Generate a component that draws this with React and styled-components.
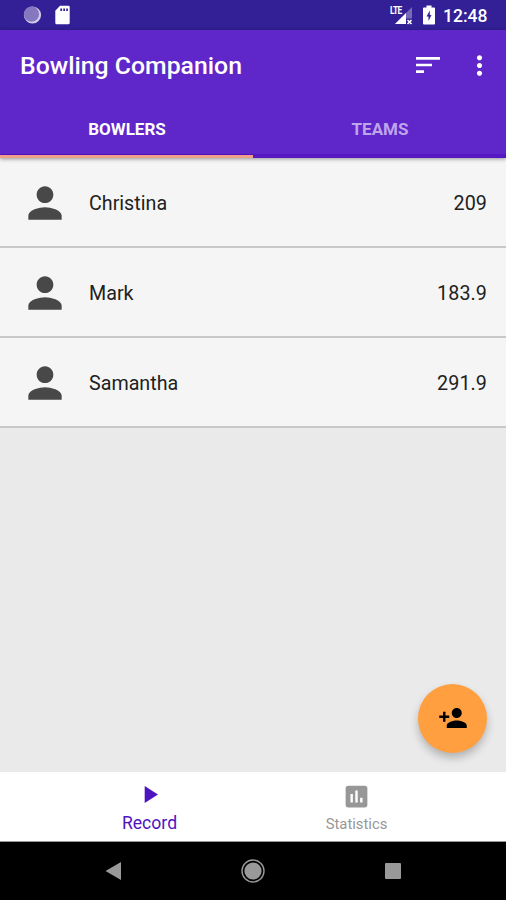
import React, { useState } from "react";
import styled, { createGlobalStyle } from "styled-components";

const GlobalStyle = createGlobalStyle`
  * {
    box-sizing: border-box;
  }

  body {
    margin: 0;
    font-family: Roboto, "Liberation Sans", sans-serif;
  }

  svg {
    display: block;
    flex-shrink: 0;
  }

  button {
    border: 0;
    padding: 0;
    background: none;
    font-family: inherit;
  }
`;

const Screen = styled.div`
  display: flex;
  flex-direction: column;
  width: 506px;
  height: 900px;
  overflow: hidden;
  background: #eaeaea;
`;

const StatusBar = styled.div`
  display: flex;
  align-items: center;
  justify-content: space-between;
  height: 30px;
  padding: 0 19px 0 23px;
  background: #331f96;
  color: #fff;
`;

const StatusGroup = styled.div`
  display: flex;
  align-items: center;
  gap: ${props => props.$gap};
`;

const Clock = styled.span`
  width: 44px;
  margin-left: -1px;
  font-size: 17.5px;
  font-weight: 500;
  line-height: 30px;
  padding-top: 2px;
  white-space: nowrap;
`;

const Header = styled.header`
  position: relative;
  background: #5f27ca;
  color: #fff;
  box-shadow: 0 1px 4px rgba(0, 0, 0, 0.4);
`;

const Toolbar = styled.div`
  display: flex;
  align-items: center;
  height: 70px;
  padding: 0 11px 0 20px;
`;

const Title = styled.h1`
  flex: 1;
  margin: 2px 0 0;
  font-size: 24.8px;
  font-weight: 500;
  line-height: 30px;
  white-space: nowrap;
`;

const ToolbarButton = styled.button`
  margin-left: 20px;
  color: #fff;
`;

const Tabs = styled.div`
  display: flex;
  height: 58px;
`;

const Tab = styled.button`
  flex: 1;
  height: 58px;
  padding: 2px 0 0 1px;
  border-bottom: 3px solid ${props => (props.$active ? "#f0a08a" : "#5618c2")};
  box-shadow: inset 0 -1px 0 ${props => (props.$active ? "#5010bd" : "#5618c2")};
  color: ${props => (props.$active ? "#fff" : "#bfa5ea")};
  font-size: 17px;
  font-weight: 700;
`;

const List = styled.main`
  flex: 1;
`;

const Row = styled.div`
  display: flex;
  align-items: center;
  height: 90px;
  padding: 0 19px 0 20px;
  border-bottom: 2px solid #c8c8c8;
  background: #f5f5f5;
  color: #212121;
  font-size: 19.7px;
`;

const Name = styled.span`
  flex: 1;
  margin-left: 19px;
  padding-top: 2px;
`;

const Average = styled.span`
  padding-top: 2px;
  letter-spacing: 0.1px;
`;

const Fab = styled.button`
  position: absolute;
  left: 418px;
  top: 684px;
  display: flex;
  align-items: center;
  justify-content: center;
  width: 69px;
  height: 69px;
  padding-bottom: 1px;
  border-radius: 50%;
  background: #ff9f40;
  color: #000;
  box-shadow: 0 5px 8px rgba(0, 0, 0, 0.24);
`;

const BottomNav = styled.nav`
  display: flex;
  justify-content: center;
  height: 70px;
  border-bottom: 1px solid #999;
  background: #fff;
`;

const NavItem = styled.button`
  display: flex;
  flex-direction: column;
  align-items: center;
  width: 207px;
  padding-top: ${props => (props.$active ? "8px" : "10px")};
  color: ${props => (props.$active ? "#4d14c1" : "#979797")};
`;

const NavLabel = styled.span`
  margin-top: ${props => (props.$active ? "4px" : "3px")};
  font-size: ${props => (props.$active ? "17.6px" : "14.8px")};
  line-height: 20px;
`;

const SystemBar = styled.div`
  display: flex;
  align-items: center;
  justify-content: space-between;
  height: 58px;
  padding: 0 105px 0 104px;
  background: #000;
  color: #999;
`;

// 24x24 icon, scaled to the given size
function Icon({ size, d }) {
  return (
    <svg width={size} height={size} viewBox="0 0 24 24" fill="currentColor">
      <path d={d} />
    </svg>
  );
}

const icons = {
  sort: "M3 18h6v-2H3v2zM3 6v2h18V6H3zm0 7h12v-2H3v2z",
  more: "M12 8c1.1 0 2-.9 2-2s-.9-2-2-2-2 .9-2 2 .9 2 2 2zm0 2c-1.1 0-2 .9-2 2s.9 2 2 2 2-.9 2-2-.9-2-2-2zm0 6c-1.1 0-2 .9-2 2s.9 2 2 2 2-.9 2-2-.9-2-2-2z",
  person: "M12 12c2.21 0 4-1.79 4-4s-1.79-4-4-4-4 1.79-4 4 1.79 4 4 4zm0 2c-2.67 0-8 1.34-8 4v2h16v-2c0-2.66-5.33-4-8-4z",
  personAdd: "M15 12c2.21 0 4-1.79 4-4s-1.79-4-4-4-4 1.79-4 4 1.79 4 4 4zm-9-2V7H4v3H1v2h3v3h2v-3h3v-2H6zm9 4c-2.67 0-8 1.34-8 4v2h16v-2c0-2.66-5.33-4-8-4z",
  play: "M8 5v14l11-7z",
  chart: "M19 3H5c-1.1 0-2 .9-2 2v14c0 1.1.9 2 2 2h14c1.1 0 2-.9 2-2V5c0-1.1-.9-2-2-2zM9 17H7v-7h2v7zm4 0h-2V7h2v10zm4 0h-2v-4h2v4z",
};

const bowlers = [
  { name: "Christina", average: "209" },
  { name: "Mark", average: "183.9" },
  { name: "Samantha", average: "291.9" },
];

const PersonIcon = styled.div`
  padding-top: 1px;
  color: #484848;
`;

function StatusIcons() {
  return (
    <StatusGroup $gap="13px">
      <svg width="19" height="20" viewBox="0 0 19 20">
        <circle cx="9.5" cy="10" r="8.6" fill="#d3cdec" />
        <circle cx="8.5" cy="9.2" r="7.6" fill="#8578bf" />
      </svg>
      <svg width="15" height="20" viewBox="0 0 15 20">
        <path d="M5 .7h8.3q1.4 0 1.4 1.4v15.7q0 1.5-1.4 1.5H1.7Q.3 19.3.3 17.8V5.7z" fill="#fff" />
        <path d="M5.3 3.500h1.8v2.500H5.3zM8.3 3.500H10v2.500H8.3zM11.2 3.500h1.7v2.500h-1.7z" fill="#331f96" />
      </svg>
    </StatusGroup>
  );
}

const Signal = styled.div`
  position: relative;
  width: 24px;
  height: 20px;
`;

const Lte = styled.span`
  position: absolute;
  left: 0;
  top: 1px;
  font-size: 10.5px;
  font-weight: 700;
  line-height: 9px;
  letter-spacing: -0.8px;
  transform: scaleX(0.8);
  transform-origin: left;
`;

function SignalIcons() {
  return (
    <StatusGroup $gap="9px">
      <Signal>
        <svg width="24" height="20" viewBox="0 0 24 20">
          <path d="M22 2v17H5z" fill="#7669b8" />
          <path d="M16 8v11H5z" fill="#fff" />
          <path d="M16 13.500h7v6.500h-7z" fill="#331f96" />
          <path d="M17.5 15l4 4M21.5 15l-4 4" stroke="#fff" strokeWidth="1.6" />
        </svg>
        <Lte>LTE</Lte>
      </Signal>
      <svg width="12" height="20" viewBox="0 0 12 20">
        <path d="M3.5.5h5v2H11q1 0 1 1v15q0 1-1 1H1q-1 0-1-1v-15q0-1 1-1h2.5z" fill="#fff" />
        <path d="M6.8 5.500L3.500 11.500h2v4.500L8.500 10H6.800z" fill="#331f96" />
      </svg>
      <Clock>12:48</Clock>
    </StatusGroup>
  );
}

function App() {
  const [tab, setTab] = useState("BOWLERS");
  const [page, setPage] = useState("Record");

  return (
    <Screen>
      <GlobalStyle />
      <StatusBar>
        <StatusIcons />
        <SignalIcons />
      </StatusBar>
      <Header>
        <Toolbar>
          <Title>Bowling Companion</Title>
          <ToolbarButton aria-label="Sort">
            <Icon size={32} d={icons.sort} />
          </ToolbarButton>
          <ToolbarButton aria-label="More">
            <Icon size={31} d={icons.more} />
          </ToolbarButton>
        </Toolbar>
        <Tabs>
          {["BOWLERS", "TEAMS"].map(label => (
            <Tab key={label} $active={tab === label} onClick={() => setTab(label)}>
              {label}
            </Tab>
          ))}
        </Tabs>
      </Header>
      <List>
        {bowlers.map(bowler => (
          <Row key={bowler.name}>
            <PersonIcon>
              <Icon size={50} d={icons.person} />
            </PersonIcon>
            <Name>{bowler.name}</Name>
            <Average>{bowler.average}</Average>
          </Row>
        ))}
      </List>
      <Fab aria-label="Add bowler">
        <Icon size={30} d={icons.personAdd} />
      </Fab>
      <BottomNav>
        <NavItem $active={page === "Record"} onClick={() => setPage("Record")}>
          <Icon size={29} d={icons.play} />
          <NavLabel $active={page === "Record"}>Record</NavLabel>
        </NavItem>
        <NavItem $active={page === "Statistics"} onClick={() => setPage("Statistics")}>
          <Icon size={29} d={icons.chart} />
          <NavLabel $active={page === "Statistics"}>Statistics</NavLabel>
        </NavItem>
      </BottomNav>
      <SystemBar>
        <svg width="17" height="18" viewBox="0 0 17 18" fill="currentColor">
          <path d="M17 0v18L1.5 9z" />
        </svg>
        <svg width="24" height="24" viewBox="0 0 24 24" fill="currentColor">
          <circle cx="12" cy="12" r="11" fill="none" stroke="currentColor" strokeWidth="1.4" />
          <circle cx="12" cy="12" r="8.6" />
        </svg>
        <svg width="16" height="16" viewBox="0 0 16 16" fill="currentColor">
          <rect width="16" height="16" rx="1" />
        </svg>
      </SystemBar>
    </Screen>
  );
}

export default App;
